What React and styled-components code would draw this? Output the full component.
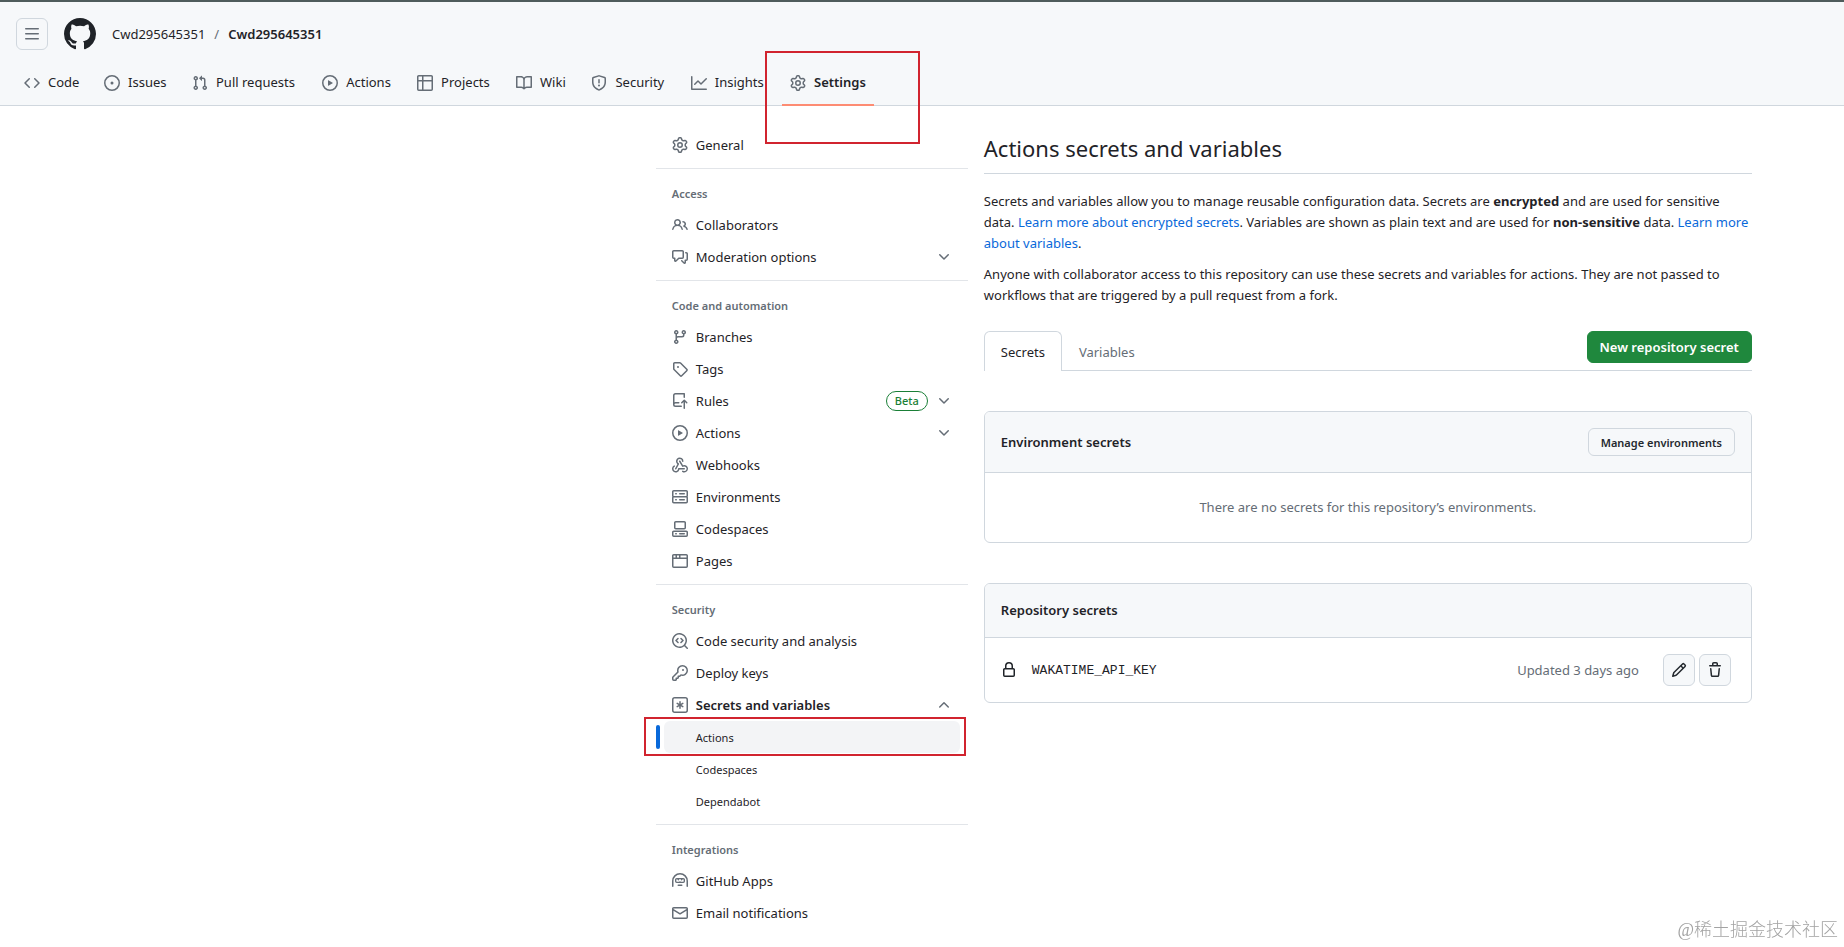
import React from 'react';
import styled, { createGlobalStyle, css } from 'styled-components';

const GlobalStyle = createGlobalStyle`
  * {
    box-sizing: border-box;
  }
  body {
    margin: 0;
    background: #ffffff;
    color: #1f2328;
    font-family: 'Noto Sans', 'Open Sans', sans-serif;
    font-size: 13px;
    line-height: 21px;
  }
  a {
    color: inherit;
    text-decoration: none;
  }
  button {
    font-family: inherit;
    cursor: pointer;
  }
  ul {
    margin: 0;
    padding: 0;
    list-style: none;
  }
`;

const ICONS = {
  menu: 'M1 2.75A.75.75 0 0 1 1.75 2h12.5a.75.75 0 0 1 0 1.5H1.75A.75.75 0 0 1 1 2.75Zm0 5A.75.75 0 0 1 1.75 7h12.5a.75.75 0 0 1 0 1.5H1.75A.75.75 0 0 1 1 7.75ZM1.75 12h12.5a.75.75 0 0 1 0 1.5H1.75a.75.75 0 0 1 0-1.5Z',
  github:
    'M8 0c4.42 0 8 3.58 8 8a8.013 8.013 0 0 1-5.45 7.59c-.4.08-.55-.17-.55-.38 0-.27.01-1.13.01-2.2 0-.75-.25-1.23-.54-1.48 1.78-.2 3.65-.88 3.65-3.95 0-.88-.31-1.59-.82-2.15.08-.2.36-1.02-.08-2.12 0 0-.67-.22-2.2.82-.64-.18-1.32-.27-2-.27-.68 0-1.36.09-2 .27-1.53-1.03-2.2-.82-2.2-.82-.44 1.1-.16 1.92-.08 2.12-.51.56-.82 1.28-.82 2.15 0 3.06 1.86 3.75 3.64 3.95-.23.2-.44.55-.51 1.07-.46.21-1.61.55-2.33-.66-.15-.24-.6-.83-1.23-.82-.67.01-.27.38.01.53.34.19.73.9.82 1.13.16.45.68 1.31 2.69.94 0 .67.01 1.3.01 1.49 0 .21-.15.45-.55.38A7.995 7.995 0 0 1 0 8c0-4.42 3.58-8 8-8Z',
  code: 'm11.28 3.22 4.25 4.25a.75.75 0 0 1 0 1.06l-4.25 4.25a.749.749 0 0 1-1.275-.326.749.749 0 0 1 .215-.734L13.94 8l-3.72-3.72a.749.749 0 0 1 .326-1.275.749.749 0 0 1 .734.215Zm-6.56 0a.751.751 0 0 1 1.042.018.751.751 0 0 1 .018 1.042L2.06 8l3.72 3.72a.749.749 0 0 1-.326 1.275.749.749 0 0 1-.734-.215L.47 8.53a.75.75 0 0 1 0-1.06Z',
  issue:
    'M8 9.5a1.5 1.5 0 1 0 0-3 1.5 1.5 0 0 0 0 3ZM8 0a8 8 0 1 1 0 16A8 8 0 0 1 8 0ZM1.5 8a6.5 6.5 0 1 0 13 0 6.5 6.5 0 0 0-13 0Z',
  pull: 'M1.5 3.25a2.25 2.25 0 1 1 3 2.122v5.256a2.251 2.251 0 1 1-1.5 0V5.372A2.25 2.25 0 0 1 1.5 3.25Zm5.677-.177L9.573.677A.25.25 0 0 1 10 .854V2.5h1A2.5 2.5 0 0 1 13.5 5v5.628a2.251 2.251 0 1 1-1.5 0V5a1 1 0 0 0-1-1h-1v1.646a.25.25 0 0 1-.427.177L7.177 3.427a.25.25 0 0 1 0-.354ZM3.75 2.5a.75.75 0 1 0 0 1.5.75.75 0 0 0 0-1.5Zm0 9.5a.75.75 0 1 0 0 1.5.75.75 0 0 0 0-1.5Zm8.25.75a.75.75 0 1 0 1.5 0 .75.75 0 0 0-1.5 0Z',
  play: 'M8 0a8 8 0 1 1 0 16A8 8 0 0 1 8 0ZM1.5 8a6.5 6.5 0 1 0 13 0 6.5 6.5 0 0 0-13 0Zm4.879-2.773 4.264 2.559a.25.25 0 0 1 0 .428l-4.264 2.559A.25.25 0 0 1 6 10.559V5.442a.25.25 0 0 1 .379-.215Z',
  table:
    'M0 1.75C0 .784.784 0 1.75 0h12.5C15.216 0 16 .784 16 1.75v12.5A1.75 1.75 0 0 1 14.25 16H1.75A1.75 1.75 0 0 1 0 14.25ZM6.5 6.5v8h7.75a.25.25 0 0 0 .25-.25V6.5Zm8-1.5V1.75a.25.25 0 0 0-.25-.25H6.5V5Zm-13 1.5v7.75c0 .138.112.25.25.25H5v-8ZM5 5V1.5H1.75a.25.25 0 0 0-.25.25V5Z',
  book: 'M0 1.75A.75.75 0 0 1 .75 1h4.253c1.227 0 2.317.59 3 1.501A3.743 3.743 0 0 1 11.006 1h4.245a.75.75 0 0 1 .75.75v10.5a.75.75 0 0 1-.75.75h-4.507a2.25 2.25 0 0 0-1.591.659l-.622.621a.75.75 0 0 1-1.06 0l-.622-.621A2.25 2.25 0 0 0 5.258 13H.75a.75.75 0 0 1-.75-.75Zm7.251 10.324.004-5.073-.002-2.253A2.25 2.25 0 0 0 5.003 2.5H1.5v9h3.757a3.75 3.75 0 0 1 1.994.574ZM8.755 4.75l-.004 7.322a3.752 3.752 0 0 1 1.992-.572H14.5v-9h-3.495a2.25 2.25 0 0 0-2.25 2.25Z',
  shield:
    'M7.467.133a1.748 1.748 0 0 1 1.066 0l5.25 1.68A1.75 1.75 0 0 1 15 3.48V7c0 1.566-.32 3.182-1.303 4.682-.983 1.498-2.585 2.813-5.032 3.855a1.697 1.697 0 0 1-1.33 0c-2.447-1.042-4.049-2.357-5.032-3.855C1.32 10.182 1 8.566 1 7V3.48a1.75 1.75 0 0 1 1.217-1.667Zm.61 1.429a.25.25 0 0 0-.153 0l-5.25 1.68a.25.25 0 0 0-.174.238V7c0 1.358.275 2.666 1.057 3.86.784 1.194 2.121 2.34 4.366 3.297a.196.196 0 0 0 .154 0c2.245-.956 3.582-2.104 4.366-3.298C13.225 9.666 13.5 8.36 13.5 7V3.48a.251.251 0 0 0-.174-.237l-5.25-1.68ZM8.75 4.75v3a.75.75 0 0 1-1.5 0v-3a.75.75 0 0 1 1.5 0ZM9 10.5a1 1 0 1 1-2 0 1 1 0 0 1 2 0Z',
  graph:
    'M1.5 1.75V13.5h13.75a.75.75 0 0 1 0 1.5H.75a.75.75 0 0 1-.75-.75V1.75a.75.75 0 0 1 1.5 0Zm14.28 2.53-5.25 5.25a.75.75 0 0 1-1.06 0L7 7.06 4.28 9.78a.751.751 0 0 1-1.042-.018.751.751 0 0 1-.018-1.042l3.25-3.25a.75.75 0 0 1 1.06 0L10 7.94l4.72-4.72a.751.751 0 0 1 1.042.018.751.751 0 0 1 .018 1.042Z',
  gear: 'M8 0a8.2 8.2 0 0 1 .701.031C9.444.095 9.99.645 10.16 1.29l.288 1.107c.018.066.079.158.212.224.231.114.454.243.668.386.123.082.233.09.299.071l1.103-.303c.644-.176 1.392.021 1.82.63.27.385.506.792.704 1.218.315.675.111 1.422-.364 1.891l-.814.806c-.049.048-.098.147-.088.294.016.257.016.515 0 .772-.01.147.038.246.088.294l.814.806c.475.469.679 1.216.364 1.891a7.977 7.977 0 0 1-.704 1.217c-.428.61-1.176.807-1.82.63l-1.102-.302c-.067-.019-.177-.011-.3.071a5.909 5.909 0 0 1-.668.386c-.133.066-.194.158-.211.224l-.29 1.106c-.168.646-.715 1.196-1.458 1.26a8.006 8.006 0 0 1-1.402 0c-.743-.064-1.289-.614-1.458-1.26l-.289-1.106c-.018-.066-.079-.158-.212-.224a5.738 5.738 0 0 1-.668-.386c-.123-.082-.233-.09-.299-.071l-1.103.303c-.644.176-1.392-.021-1.82-.63a8.12 8.12 0 0 1-.704-1.218c-.315-.675-.111-1.422.363-1.891l.815-.806c.05-.048.098-.147.088-.294a6.214 6.214 0 0 1 0-.772c.01-.147-.038-.246-.088-.294l-.815-.806C.635 6.045.431 5.298.746 4.623a7.92 7.92 0 0 1 .704-1.217c.428-.61 1.176-.807 1.82-.63l1.102.302c.067.019.177.011.3-.071.214-.143.437-.272.668-.386.133-.066.194-.158.211-.224l.29-1.106C6.009.645 6.556.095 7.299.03 7.53.01 7.764 0 8 0Zm-.571 1.525c-.036.003-.108.036-.137.146l-.289 1.105c-.147.561-.549.967-.998 1.189-.173.086-.34.183-.5.29-.417.278-.97.423-1.529.27l-1.103-.303c-.109-.03-.175.016-.195.045-.22.312-.412.644-.573.99-.014.031-.021.11.059.19l.815.806c.411.406.562.957.53 1.456a4.709 4.709 0 0 0 0 .582c.032.499-.119 1.05-.53 1.456l-.815.806c-.081.08-.073.159-.059.19.162.346.353.677.573.989.02.03.085.076.195.046l1.102-.303c.56-.153 1.113-.008 1.53.27.161.107.328.204.501.29.447.222.85.629.997 1.189l.289 1.105c.029.109.101.143.137.146a6.6 6.6 0 0 0 1.142 0c.036-.003.108-.036.137-.146l.289-1.105c.147-.561.549-.967.998-1.189.173-.086.34-.183.5-.29.417-.278.97-.423 1.529-.27l1.103.303c.109.029.175-.016.195-.045.22-.313.411-.644.573-.99.014-.031.021-.11-.059-.19l-.815-.806c-.411-.406-.562-.957-.53-1.456a4.709 4.709 0 0 0 0-.582c-.032-.499.119-1.05.53-1.456l.815-.806c.081-.08.073-.159.059-.19a6.464 6.464 0 0 0-.573-.989c-.02-.03-.085-.076-.195-.046l-1.102.303c-.56.153-1.113.008-1.53-.27a4.44 4.44 0 0 0-.501-.29c-.447-.222-.85-.629-.997-1.189l-.289-1.105c-.029-.11-.101-.143-.137-.146a6.6 6.6 0 0 0-1.142 0ZM11 8a3 3 0 1 1-6 0 3 3 0 0 1 6 0ZM9.5 8a1.5 1.5 0 1 0-3.001.001A1.5 1.5 0 0 0 9.5 8Z',
  people:
    'M2 5.5a3.5 3.5 0 1 1 5.898 2.549 5.508 5.508 0 0 1 3.034 4.084.75.75 0 1 1-1.482.235 4 4 0 0 0-7.9 0 .75.75 0 0 1-1.482-.236A5.507 5.507 0 0 1 3.102 8.05 3.493 3.493 0 0 1 2 5.5ZM11 4a3.001 3.001 0 0 1 2.22 5.018 5.01 5.01 0 0 1 2.56 3.012.749.749 0 0 1-.885.954.752.752 0 0 1-.549-.514 3.507 3.507 0 0 0-2.522-2.372.75.75 0 0 1-.574-.73v-.352a.75.75 0 0 1 .416-.672A1.5 1.5 0 0 0 11 5.5.75.75 0 0 1 11 4Zm-5.5-.5a2 2 0 1 0-.001 3.999A2 2 0 0 0 5.5 3.5Z',
  discussion:
    'M1.75 1h8.5c.966 0 1.75.784 1.75 1.75v5.5A1.75 1.75 0 0 1 10.25 10H7.061l-2.574 2.573A1.458 1.458 0 0 1 2 11.543V10h-.25A1.75 1.75 0 0 1 0 8.25v-5.5C0 1.784.784 1 1.75 1ZM1.5 2.75v5.5c0 .138.112.25.25.25h1a.75.75 0 0 1 .75.75v2.19l2.72-2.72a.749.749 0 0 1 .53-.22h3.5a.25.25 0 0 0 .25-.25v-5.5a.25.25 0 0 0-.25-.25h-8.5a.25.25 0 0 0-.25.25Zm13 2a.25.25 0 0 0-.25-.25h-.5a.75.75 0 0 1 0-1.5h.5c.966 0 1.75.784 1.75 1.75v5.5A1.75 1.75 0 0 1 14.25 12H14v1.543a1.458 1.458 0 0 1-2.487 1.03L9.22 12.28a.749.749 0 0 1 .326-1.275.749.749 0 0 1 .734.215l2.22 2.22v-2.19a.75.75 0 0 1 .75-.75h1a.25.25 0 0 0 .25-.25Z',
  branch:
    'M9.5 3.25a2.25 2.25 0 1 1 3 2.122V6A2.5 2.5 0 0 1 10 8.5H6a1 1 0 0 0-1 1v1.128a2.251 2.251 0 1 1-1.5 0V5.372a2.25 2.25 0 1 1 1.5 0v1.836A2.493 2.493 0 0 1 6 7h4a1 1 0 0 0 1-1v-.628A2.25 2.25 0 0 1 9.5 3.25Zm-6 0a.75.75 0 1 0 1.5 0 .75.75 0 0 0-1.5 0Zm8.25-.75a.75.75 0 1 0 0 1.5.75.75 0 0 0 0-1.5ZM4.25 12a.75.75 0 1 0 0 1.5.75.75 0 0 0 0-1.5Z',
  tag: 'M1 7.775V2.75C1 1.784 1.784 1 2.75 1h5.025c.464 0 .91.184 1.238.513l6.25 6.25a1.75 1.75 0 0 1 0 2.474l-5.026 5.026a1.75 1.75 0 0 1-2.474 0l-6.25-6.25A1.752 1.752 0 0 1 1 7.775Zm1.5 0c0 .066.026.13.073.177l6.25 6.25a.25.25 0 0 0 .354 0l5.025-5.025a.25.25 0 0 0 0-.354l-6.25-6.25a.25.25 0 0 0-.177-.073H2.75a.25.25 0 0 0-.25.25ZM6 5a1 1 0 1 1 0 2 1 1 0 0 1 0-2Z',
  repoPush:
    'M1 2.5A2.5 2.5 0 0 1 3.5 0h8.75a.75.75 0 0 1 .75.75v3.5a.75.75 0 0 1-1.5 0V1.5h-8a1 1 0 0 0-1 1v6.708A2.493 2.493 0 0 1 3.5 9h3.25a.75.75 0 0 1 0 1.5H3.5a1 1 0 0 0 0 2h5.75a.75.75 0 0 1 0 1.5H3.5A2.5 2.5 0 0 1 1 11.5Zm13.23 7.79h-.001l-1.224-1.224v6.184a.75.75 0 0 1-1.5 0V9.066L10.28 10.29a.75.75 0 0 1-1.06-1.061l2.505-2.504a.75.75 0 0 1 1.06 0L15.29 9.23a.751.751 0 0 1-.018 1.042.751.751 0 0 1-1.042.018Z',
  webhook:
    'M5.5 4.25a2.25 2.25 0 0 1 4.5 0 .75.75 0 0 0 1.5 0 3.75 3.75 0 1 0-6.14 2.889l-2.272 4.258a.75.75 0 0 0 1.324.706L7 7.25a.75.75 0 0 0-.309-1.015A2.25 2.25 0 0 1 5.5 4.25ZM7.364 3.607a.75.75 0 0 1 1.03.257l2.608 4.349a3.75 3.75 0 1 1-.628 6.785.75.75 0 0 1 .752-1.299 2.25 2.25 0 1 0-.033-3.88.75.75 0 0 1-1.03-.256L7.107 4.636a.75.75 0 0 1 .257-1.03ZM2.9 8.776A.75.75 0 0 1 2.625 9.8 2.25 2.25 0 1 0 6 11.75a.75.75 0 0 1 .75-.751h5.5a.75.75 0 0 1 0 1.5H7.425a3.751 3.751 0 1 1-5.55-3.998.75.75 0 0 1 1.024.274Z',
  server:
    'M1.75 1h12.5c.966 0 1.75.784 1.75 1.75v4c0 .372-.116.717-.314 1 .198.283.314.628.314 1v4a1.75 1.75 0 0 1-1.75 1.75H1.75A1.75 1.75 0 0 1 0 12.75v-4c0-.358.109-.707.314-1a1.739 1.739 0 0 1-.314-1v-4C0 1.784.784 1 1.75 1ZM1.5 2.75v4c0 .138.112.25.25.25h12.5a.25.25 0 0 0 .25-.25v-4a.25.25 0 0 0-.25-.25H1.75a.25.25 0 0 0-.25.25Zm.25 5.75a.25.25 0 0 0-.25.25v4c0 .138.112.25.25.25h12.5a.25.25 0 0 0 .25-.25v-4a.25.25 0 0 0-.25-.25ZM7 4.75A.75.75 0 0 1 7.75 4h4.5a.75.75 0 0 1 0 1.5h-4.5A.75.75 0 0 1 7 4.75ZM7.75 10h4.5a.75.75 0 0 1 0 1.5h-4.5a.75.75 0 0 1 0-1.5ZM3 4.75A.75.75 0 0 1 3.75 4h.5a.75.75 0 0 1 0 1.5h-.5A.75.75 0 0 1 3 4.75ZM3.75 10h.5a.75.75 0 0 1 0 1.5h-.5a.75.75 0 0 1 0-1.5Z',
  codespaces:
    'M0 11.25c0-.966.784-1.75 1.75-1.75h12.5c.966 0 1.75.784 1.75 1.75v3A1.75 1.75 0 0 1 14.25 16H1.75A1.75 1.75 0 0 1 0 14.25Zm2-9.5C2 .784 2.784 0 3.75 0h8.5C13.216 0 14 .784 14 1.75v5a1.75 1.75 0 0 1-1.75 1.75h-8.5A1.75 1.75 0 0 1 2 6.75Zm1.75-.25a.25.25 0 0 0-.25.25v5c0 .138.112.25.25.25h8.5a.25.25 0 0 0 .25-.25v-5a.25.25 0 0 0-.25-.25Zm-2 9.5a.25.25 0 0 0-.25.25v3c0 .138.112.25.25.25h12.5a.25.25 0 0 0 .25-.25v-3a.25.25 0 0 0-.25-.25ZM7 12.75a.75.75 0 0 1 .75-.75h4.5a.75.75 0 0 1 0 1.5h-4.5a.75.75 0 0 1-.75-.75Zm-4 0a.75.75 0 0 1 .75-.75h.5a.75.75 0 0 1 0 1.5h-.5a.75.75 0 0 1-.75-.75Z',
  browser:
    'M0 2.75C0 1.784.784 1 1.75 1h12.5c.966 0 1.75.784 1.75 1.75v10.5A1.75 1.75 0 0 1 14.25 15H1.75A1.75 1.75 0 0 1 0 13.25ZM14.5 6h-13v7.25c0 .138.112.25.25.25h12.5a.25.25 0 0 0 .25-.25Zm-6-3.5v2h6V2.75a.25.25 0 0 0-.25-.25ZM5 2.5v2h2v-2Zm-3.25 0a.25.25 0 0 0-.25.25V4.5h2v-2Z',
  codescan:
    'M8.47 4.97a.75.75 0 0 0 0 1.06L9.94 7.5 8.47 8.97a.75.75 0 1 0 1.06 1.06l2-2a.75.75 0 0 0 0-1.06l-2-2a.75.75 0 0 0-1.06 0ZM6.53 6.03a.75.75 0 0 0-1.06-1.06l-2 2a.75.75 0 0 0 0 1.06l2 2a.75.75 0 1 0 1.06-1.06L5.06 7.5l1.47-1.47ZM12.246 13.307a7.501 7.501 0 1 1 1.06-1.06l2.474 2.473a.749.749 0 1 1-1.06 1.06l-2.474-2.473ZM1.5 7.5a6.002 6.002 0 0 0 3.608 5.504 6.002 6.002 0 0 0 6.486-1.117.748.748 0 0 1 .292-.293A6 6 0 1 0 1.5 7.5Z',
  key: 'M10.5 0a5.499 5.499 0 1 1-1.288 10.848l-.932.932a.749.749 0 0 1-.53.22H7v.75a.749.749 0 0 1-.22.53l-.5.5a.749.749 0 0 1-.53.22H5v.75a.749.749 0 0 1-.22.53l-.5.5a.749.749 0 0 1-.53.22h-2A1.75 1.75 0 0 1 0 14.25v-2c0-.199.079-.389.22-.53l4.932-4.932A5.5 5.5 0 0 1 10.5 0Zm-4 5.5c-.001.431.069.86.205 1.269a.75.75 0 0 1-.181.768L1.5 12.56v1.69c0 .138.112.25.25.25h1.69l.06-.06v-1.19a.75.75 0 0 1 .75-.75h1.19l.06-.06v-1.19a.75.75 0 0 1 .75-.75h1.19l1.023-1.025a.75.75 0 0 1 .768-.18A4 4 0 1 0 6.5 5.5ZM11 6a1 1 0 1 1 0-2 1 1 0 0 1 0 2Z',
  asterisk:
    'M0 2.75A2.75 2.75 0 0 1 2.75 0h10.5A2.75 2.75 0 0 1 16 2.75v10.5A2.75 2.75 0 0 1 13.25 16H2.75A2.75 2.75 0 0 1 0 13.25ZM2.75 1.5c-.69 0-1.25.56-1.25 1.25v10.5c0 .69.56 1.25 1.25 1.25h10.5c.69 0 1.25-.56 1.25-1.25V2.75c0-.69-.56-1.25-1.25-1.25ZM8 4a.75.75 0 0 1 .75.75V6.7l1.69-.975a.75.75 0 0 1 .75 1.3L9.5 8l1.69.976a.75.75 0 0 1-.75 1.298L8.75 9.3v1.951a.75.75 0 0 1-1.5 0V9.299l-1.69.976a.75.75 0 0 1-.75-1.3L6.5 8l-1.69-.975a.75.75 0 0 1 .75-1.3l1.69.976V4.75A.75.75 0 0 1 8 4Z',
  hubot:
    'M0 8a8 8 0 1 1 16 0v5.25a.75.75 0 0 1-1.5 0V8a6.5 6.5 0 1 0-13 0v5.25a.75.75 0 0 1-1.5 0Zm5.5 4.25a.75.75 0 0 1 .75-.75h3.5a.75.75 0 0 1 0 1.5h-3.5a.75.75 0 0 1-.75-.75ZM3 6.75C3 5.784 3.784 5 4.75 5h6.5c.966 0 1.75.784 1.75 1.75v1.5A1.75 1.75 0 0 1 11.25 10h-6.5A1.75 1.75 0 0 1 3 8.25ZM4.75 6.3a.4.4 0 0 0-.4.45v1.5c0 .25.15.45.4.45h6.5a.4.4 0 0 0 .4-.45v-1.5a.4.4 0 0 0-.4-.45ZM5.2 6.3 6.4 7.7 7.3 6.3ZM8.7 6.3 9.6 7.7 10.8 6.3ZM7.4 8.7 8 7.7 8.6 8.7Z',
  mail: 'M1.75 2h12.5c.966 0 1.75.784 1.75 1.75v8.5A1.75 1.75 0 0 1 14.25 14H1.75A1.75 1.75 0 0 1 0 12.25v-8.5C0 2.784.784 2 1.75 2ZM1.5 12.251c0 .138.112.25.25.25h12.5a.25.25 0 0 0 .25-.25V5.809L8.38 9.397a.75.75 0 0 1-.76 0L1.5 5.809v6.442Zm13-8.181v-.32a.25.25 0 0 0-.25-.25H1.75a.25.25 0 0 0-.25.25v.32L8 7.88Z',
  lock: 'M4 4a4 4 0 0 1 8 0v2h.25c.966 0 1.75.784 1.75 1.75v5.5A1.75 1.75 0 0 1 12.25 15h-8.5A1.75 1.75 0 0 1 2 13.25v-5.5C2 6.784 2.784 6 3.75 6H4Zm8.25 3.5h-8.5a.25.25 0 0 0-.25.25v5.5c0 .138.112.25.25.25h8.5a.25.25 0 0 0 .25-.25v-5.5a.25.25 0 0 0-.25-.25ZM10.5 6V4a2.5 2.5 0 1 0-5 0v2Z',
  pencil:
    'M11.013 1.427a1.75 1.75 0 0 1 2.474 0l1.086 1.086a1.75 1.75 0 0 1 0 2.474l-8.61 8.61c-.21.21-.47.364-.756.445l-3.251.93a.75.75 0 0 1-.927-.928l.929-3.25c.081-.286.235-.547.445-.758l8.61-8.61Zm.176 4.823L9.75 4.81l-6.286 6.287a.253.253 0 0 0-.064.108l-.558 1.953 1.953-.558a.253.253 0 0 0 .108-.064Zm1.238-3.763a.25.25 0 0 0-.354 0L10.811 3.75l1.439 1.44 1.263-1.263a.25.25 0 0 0 0-.354Z',
  trash:
    'M11 1.75V3h2.25a.75.75 0 0 1 0 1.5H2.75a.75.75 0 0 1 0-1.5H5V1.75C5 .784 5.784 0 6.75 0h2.5C10.216 0 11 .784 11 1.75ZM4.496 6.675l.66 6.6a.25.25 0 0 0 .249.225h5.19a.25.25 0 0 0 .249-.225l.66-6.6a.75.75 0 0 1 1.492.149l-.66 6.6A1.748 1.748 0 0 1 10.595 15h-5.19a1.75 1.75 0 0 1-1.741-1.575l-.66-6.6a.75.75 0 1 1 1.492-.15ZM6.5 1.75V3h3V1.75a.25.25 0 0 0-.25-.25h-2.5a.25.25 0 0 0-.25.25Z',
  down: 'M12.78 5.22a.749.749 0 0 1 0 1.06l-4.25 4.25a.749.749 0 0 1-1.06 0L3.22 6.28a.749.749 0 1 1 1.06-1.06L8 8.939l3.72-3.719a.749.749 0 0 1 1.06 0Z',
  up: 'M3.22 10.53a.749.749 0 0 1 0-1.06l4.25-4.25a.749.749 0 0 1 1.06 0l4.25 4.25a.749.749 0 1 1-1.06 1.06L8 6.811 4.28 10.53a.749.749 0 0 1-1.06 0Z',
};

const Svg = styled.svg`
  display: block;
  flex-shrink: 0;
  fill: currentColor;
`;

const Icon = ({ name, size = 16 }) => (
  <Svg width={size} height={size} viewBox="0 0 16 16" fillRule="evenodd" aria-hidden="true">
    <path d={ICONS[name]} />
  </Svg>
);

const Header = styled.header`
  background: #f6f8fa;
  border-top: 2px solid #4f5c5c;
  border-bottom: 1px solid #d0d7de;
`;

const TopBar = styled.div`
  display: flex;
  align-items: center;
  gap: 16px;
  padding: 16px 16px 8px;
`;

const MenuButton = styled.button`
  display: grid;
  place-items: center;
  width: 32px;
  height: 32px;
  padding: 0;
  color: #656d76;
  background: transparent;
  border: 1px solid #d0d7de;
  border-radius: 6px;
`;

const Logo = styled.a`
  color: #1f2328;
`;

const Crumbs = styled.nav`
  display: flex;
  gap: 9px;
  color: #656d76;
`;

const Crumb = styled.a`
  color: #1f2328;
  font-weight: ${props => (props.$current ? 600 : 400)};
`;

const TabBar = styled.nav`
  display: flex;
  gap: 8px;
  height: 47px;
  padding: 2px 16px 0;
`;

const TabLink = styled.a`
  position: relative;
  display: flex;
  align-items: center;
  gap: 8px;
  padding: 0 8px;
  font-weight: ${props => (props.$active ? 600 : 400)};
  svg {
    color: #656d76;
  }
  ${props =>
    props.$active &&
    css`
      &::after {
        content: '';
        position: absolute;
        left: 0;
        right: 0;
        bottom: -1px;
        height: 2px;
        background: #fd8c73;
      }
    `}
`;

// keeps the bold width free, so that a tab does not move when it gets active
const TabLabel = styled.span`
  &::before {
    content: attr(data-content);
    display: block;
    height: 0;
    overflow: hidden;
    visibility: hidden;
    font-weight: 600;
  }
`;

const Mark = styled.span`
  position: absolute;
  border: 2px solid #d1242f;
  pointer-events: none;
`;

const TabMark = styled(Mark)`
  top: -9px;
  left: -17px;
  width: 155px;
  height: 93px;
`;

const RowMark = styled(Mark)`
  top: -4px;
  left: -12px;
  right: 2px;
  height: 39px;
`;

const Page = styled.div`
  display: flex;
  justify-content: flex-end;
  gap: 16px;
  padding: 23px 5% 16px;
`;

const Sidebar = styled.aside`
  flex: 0 0 312px;
`;

const Group = styled.section`
  & + & {
    margin-top: 7px;
    border-top: 1px solid #e2e5e9;
  }
`;

const GroupTitle = styled.h2`
  margin: 0;
  padding: 16px 16px 6px;
  color: #656d76;
  font-size: 11px;
  font-weight: 600;
  line-height: 18px;
`;

const Item = styled.li`
  position: relative;
`;

const itemStyle = css`
  display: flex;
  align-items: center;
  gap: 8px;
  width: 100%;
  height: 32px;
  padding: 0 16px;
  color: #1f2328;
  font-size: 13px;
  text-align: left;
  svg {
    color: #656d76;
  }
`;

const ItemLink = styled.a`
  ${itemStyle}
`;

const ItemButton = styled.button`
  ${itemStyle}
  background: none;
  border: 0;
  font-weight: ${props => (props.$open ? 600 : 400)};
`;

const ItemLabel = styled.span`
  flex: 1;
`;

const Beta = styled.span`
  padding: 0 8px;
  color: #1a7f37;
  font-size: 11px;
  font-weight: 500;
  line-height: 18px;
  border: 1px solid #1a7f37;
  border-radius: 20px;
`;

const SubLink = styled.a`
  display: flex;
  align-items: center;
  height: 32px;
  margin: 0 8px;
  padding-left: 32px;
  font-size: 11px;
  border-radius: 6px;
  ${props =>
    props.$active &&
    css`
      background: #f3f4f6;
      &::before {
        content: '';
        position: absolute;
        left: 0;
        top: 4px;
        width: 4px;
        height: 24px;
        background: #0969da;
        border-radius: 6px;
      }
    `}
`;

const Main = styled.main`
  flex: 0 1 768px;
  min-width: 0;
`;

const Title = styled.h1`
  margin: 0 0 17px;
  padding: 3px 0 9px;
  font-size: 22px;
  font-weight: 400;
  line-height: 32px;
  border-bottom: 1px solid #d0d7de;
`;

const Text = styled.p`
  margin: 0 0 10px;
`;

const TextLink = styled.a`
  color: #0969da;
`;

const TabRow = styled.div`
  display: flex;
  justify-content: space-between;
  align-items: flex-start;
  margin: 25px 0 40px;
  border-bottom: 1px solid #d0d7de;
`;

const TabList = styled.div`
  display: flex;
  margin-bottom: -1px;
`;

const Tab = styled.a`
  height: 40px;
  padding: 10px 16px 8px;
  color: ${props => (props.$selected ? '#1f2328' : '#656d76')};
  background: ${props => (props.$selected ? '#ffffff' : 'transparent')};
  border: 1px solid ${props => (props.$selected ? '#d0d7de' : 'transparent')};
  border-bottom: 0;
  border-radius: 6px 6px 0 0;
`;

const PrimaryButton = styled.button`
  height: 32px;
  padding: 0 12px;
  color: #ffffff;
  background: #1f883d;
  border: 1px solid #1f883d;
  border-radius: 6px;
  font-size: 13px;
  font-weight: 600;
`;

const SmallButton = styled.button`
  height: 28px;
  padding: 0 12px;
  color: #24292f;
  background: #f6f8fa;
  border: 1px solid #d0d7de;
  border-radius: 6px;
  font-size: 11px;
  font-weight: 600;
`;

const Box = styled.section`
  margin-bottom: 40px;
  border: 1px solid #d0d7de;
  border-radius: 6px;
  overflow: hidden;
`;

const BoxHeader = styled.div`
  display: flex;
  align-items: center;
  justify-content: space-between;
  padding: 16px;
  background: #f6f8fa;
  border-bottom: 1px solid #d0d7de;
`;

const BoxTitle = styled.h3`
  margin: 0;
  font-size: 13px;
  font-weight: 600;
  line-height: ${props => (props.$tall ? 28 : 21)}px;
`;

const Empty = styled.p`
  margin: 0;
  padding: 24px;
  color: #656d76;
  text-align: center;
`;

const SecretRow = styled.li`
  display: flex;
  align-items: center;
  gap: 15px;
  padding: 16px 20px 16px 16px;
`;

const SecretName = styled.code`
  flex: 1;
  font-family: 'Liberation Mono', monospace;
  font-size: 13px;
`;

const Updated = styled.span`
  color: #656d76;
`;

const Actions = styled.div`
  display: flex;
  gap: 4px;
  margin-left: 9px;
`;

const IconButton = styled(MenuButton)`
  color: #24292f;
  background: #f6f8fa;
`;

const Watermark = styled.span`
  position: fixed;
  right: 6px;
  bottom: 4px;
  color: #a3a3a3;
  font-family: 'Liberation Serif', 'Noto Sans CJK SC', serif;
  font-size: 18px;
  font-weight: 300;
  line-height: 26px;
`;

const tabs = [
  { icon: 'code', label: 'Code' },
  { icon: 'issue', label: 'Issues' },
  { icon: 'pull', label: 'Pull requests' },
  { icon: 'play', label: 'Actions' },
  { icon: 'table', label: 'Projects' },
  { icon: 'book', label: 'Wiki' },
  { icon: 'shield', label: 'Security' },
  { icon: 'graph', label: 'Insights' },
  { icon: 'gear', label: 'Settings', active: true },
];

const groups = [
  { items: [{ icon: 'gear', label: 'General' }] },
  {
    title: 'Access',
    items: [
      { icon: 'people', label: 'Collaborators' },
      { icon: 'discussion', label: 'Moderation options', expandable: true },
    ],
  },
  {
    title: 'Code and automation',
    items: [
      { icon: 'branch', label: 'Branches' },
      { icon: 'tag', label: 'Tags' },
      { icon: 'repoPush', label: 'Rules', beta: true, expandable: true },
      { icon: 'play', label: 'Actions', expandable: true },
      { icon: 'webhook', label: 'Webhooks' },
      { icon: 'server', label: 'Environments' },
      { icon: 'codespaces', label: 'Codespaces' },
      { icon: 'browser', label: 'Pages' },
    ],
  },
  {
    title: 'Security',
    items: [
      { icon: 'codescan', label: 'Code security and analysis' },
      { icon: 'key', label: 'Deploy keys' },
      {
        icon: 'asterisk',
        label: 'Secrets and variables',
        expandable: true,
        children: ['Actions', 'Codespaces', 'Dependabot'],
      },
    ],
  },
  {
    title: 'Integrations',
    items: [
      { icon: 'hubot', label: 'GitHub Apps' },
      { icon: 'mail', label: 'Email notifications' },
    ],
  },
];

const SidebarItem = ({ item }) => {
  const open = Boolean(item.children);
  if (!item.expandable) {
    return (
      <Item>
        <ItemLink href="#">
          <Icon name={item.icon} />
          <ItemLabel>{item.label}</ItemLabel>
        </ItemLink>
      </Item>
    );
  }
  return (
    <li>
      <ItemButton type="button" $open={open} aria-expanded={open}>
        <Icon name={item.icon} />
        <ItemLabel>{item.label}</ItemLabel>
        {item.beta && <Beta>Beta</Beta>}
        <Icon name={open ? 'up' : 'down'} />
      </ItemButton>
      {open && (
        <ul>
          {item.children.map((label, index) => (
            <Item key={label}>
              <SubLink href="#" $active={index === 0}>
                {label}
              </SubLink>
              {index === 0 && <RowMark />}
            </Item>
          ))}
        </ul>
      )}
    </li>
  );
};

const App = () => {
  return (
    <>
      <GlobalStyle />
      <Header>
        <TopBar>
          <MenuButton type="button" aria-label="Open menu">
            <Icon name="menu" />
          </MenuButton>
          <Logo href="#" aria-label="Homepage">
            <Icon name="github" size={32} />
          </Logo>
          <Crumbs aria-label="Breadcrumb">
            <Crumb href="#">Cwd295645351</Crumb>
            <span>/</span>
            <Crumb href="#" $current>
              Cwd295645351
            </Crumb>
          </Crumbs>
        </TopBar>
        <TabBar aria-label="Repository">
          {tabs.map(tab => (
            <TabLink key={tab.label} href="#" $active={tab.active}>
              <Icon name={tab.icon} />
              <TabLabel data-content={tab.label}>{tab.label}</TabLabel>
              {tab.active && <TabMark />}
            </TabLink>
          ))}
        </TabBar>
      </Header>
      <Page>
        <Sidebar>
          {groups.map((group, index) => (
            <Group key={index}>
              {group.title && <GroupTitle>{group.title}</GroupTitle>}
              <ul>
                {group.items.map(item => (
                  <SidebarItem key={item.label} item={item} />
                ))}
              </ul>
            </Group>
          ))}
        </Sidebar>
        <Main>
          <Title>Actions secrets and variables</Title>
          <Text>
            Secrets and variables allow you to manage reusable configuration data. Secrets are{' '}
            <strong>encrypted</strong> and are used for sensitive data.{' '}
            <TextLink href="#">Learn more about encrypted secrets</TextLink>. Variables are shown as plain text and are
            used for <strong>non-sensitive</strong> data. <TextLink href="#">Learn more about variables</TextLink>.
          </Text>
          <Text>
            Anyone with collaborator access to this repository can use these secrets and variables for actions. They are
            not passed to workflows that are triggered by a pull request from a fork.
          </Text>
          <TabRow>
            <TabList>
              <Tab href="#" $selected>
                Secrets
              </Tab>
              <Tab href="#">Variables</Tab>
            </TabList>
            <PrimaryButton type="button">New repository secret</PrimaryButton>
          </TabRow>
          <Box>
            <BoxHeader>
              <BoxTitle $tall>Environment secrets</BoxTitle>
              <SmallButton type="button">Manage environments</SmallButton>
            </BoxHeader>
            <Empty>There are no secrets for this repository’s environments.</Empty>
          </Box>
          <Box>
            <BoxHeader>
              <BoxTitle>Repository secrets</BoxTitle>
            </BoxHeader>
            <ul>
              <SecretRow>
                <Icon name="lock" />
                <SecretName>WAKATIME_API_KEY</SecretName>
                <Updated>Updated 3 days ago</Updated>
                <Actions>
                  <IconButton type="button" aria-label="Edit WAKATIME_API_KEY">
                    <Icon name="pencil" />
                  </IconButton>
                  <IconButton type="button" aria-label="Delete WAKATIME_API_KEY">
                    <Icon name="trash" />
                  </IconButton>
                </Actions>
              </SecretRow>
            </ul>
          </Box>
        </Main>
      </Page>
      <Watermark>@稀土掘金技术社区</Watermark>
    </>
  );
};

export default App;
